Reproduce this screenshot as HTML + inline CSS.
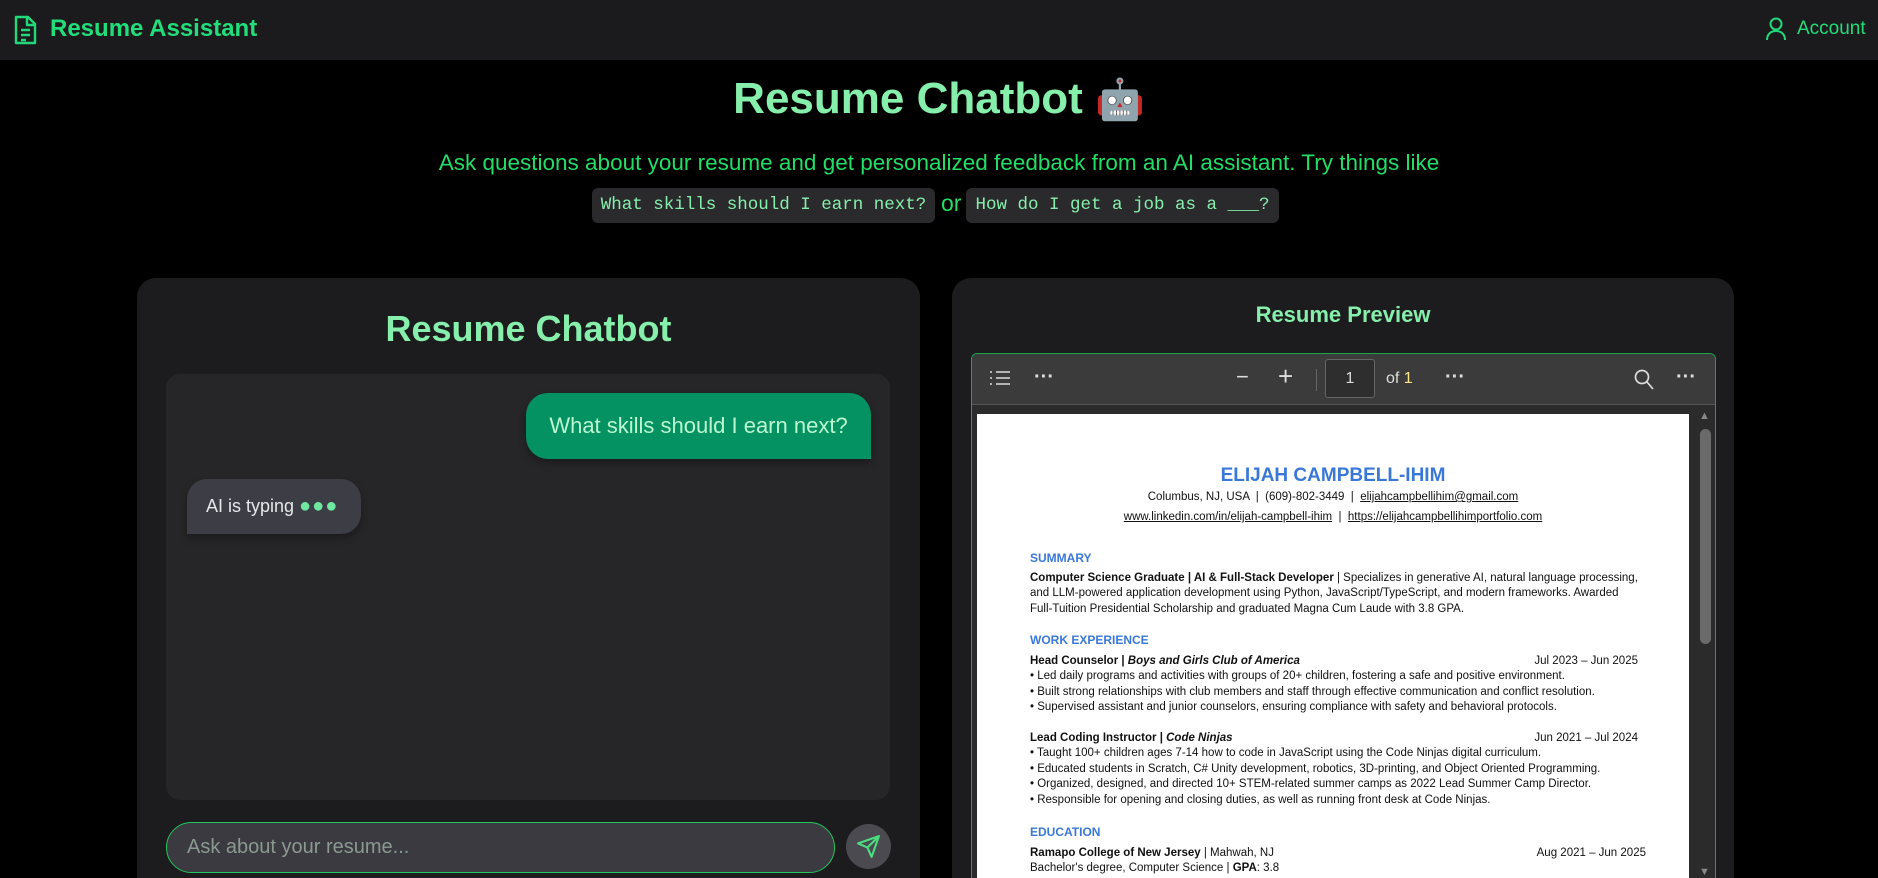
<!DOCTYPE html>
<html><head><meta charset="utf-8"><style>
*{box-sizing:border-box;margin:0;padding:0}
html,body{width:1878px;height:878px;overflow:hidden;background:#000}
#w{width:1878px;height:878px;overflow:hidden;position:relative;background:#000;font-family:"Liberation Sans",sans-serif}
.abs{position:absolute}
.hdr{left:0;top:0;width:1878px;height:60px;background:#1b1b1d}
.mono{font-family:"Liberation Mono",monospace}
.pdf{font-family:"Liberation Sans",sans-serif;font-size:11.5px;color:#111;white-space:nowrap}
.pdf .h{color:#3a78d8;font-weight:bold;font-size:12px}
.r{position:absolute;right:0}
</style></head><body><div id="w">
<div class="abs hdr"></div>
<svg class="abs" style="left:13px;top:15px" width="24" height="30" viewBox="0 0 24 30" fill="none" stroke="#22d97a" stroke-width="2.4" stroke-linejoin="round"><path d="M3 2h12l7 7v19H3z"/><path d="M14 2v8h8"/><path d="M8 15h9M8 20h9M8 25h5"/></svg>
<div class="abs" style="left:50px;top:15px;font-size:24px;font-weight:bold;color:#22dd7a">Resume Assistant</div>
<svg class="abs" style="left:1766px;top:17px" width="20" height="24" viewBox="0 0 20 24" fill="none" stroke="#22d97a" stroke-width="2"><circle cx="10" cy="7" r="5.5"/><path d="M1 23c0-6 4-9 9-9s9 3 9 9"/></svg>
<div class="abs" style="left:1797px;top:18px;font-size:19px;color:#22dd7a">Account</div>

<div class="abs" style="left:0;width:1878px;top:74px;text-align:center;font-size:44px;font-weight:bold;color:#86efac">Resume Chatbot <span style="font-size:40px">🤖</span></div>
<div class="abs" style="left:0;width:1878px;top:150px;text-align:center;font-size:22.5px;color:#22dd66">Ask questions about your resume and get personalized feedback from an AI assistant. Try things like</div>
<div class="abs mono" style="left:592px;top:188px;width:343px;height:35px;background:#2a2a2c;border-radius:6px;color:#86efac;font-size:17.5px;line-height:35px;text-align:center">What skills should I earn next?</div>
<div class="abs" style="left:941px;top:190px;font-size:23px;color:#22dd66">or</div>
<div class="abs mono" style="left:966px;top:188px;width:313px;height:35px;background:#2a2a2c;border-radius:6px;color:#86efac;font-size:17.5px;line-height:35px;text-align:center">How do I get a job as a ___?</div>

<div class="abs" style="left:137px;top:278px;width:783px;height:640px;background:#1c1c1e;border-radius:19px"></div>
<div class="abs" style="left:137px;width:783px;top:308px;text-align:center;font-size:36px;font-weight:bold;color:#86efac">Resume Chatbot</div>
<div class="abs" style="left:166px;top:374px;width:724px;height:426px;background:#262628;border-radius:14px"></div>
<div class="abs" style="left:526px;top:393px;width:345px;height:66px;background:#049262;border-radius:22px 22px 0 22px;color:#bbf7d0;font-size:22px;line-height:66px;text-align:center;box-shadow:0 4px 8px rgba(0,0,0,.3)">What skills should I earn next?</div>
<div class="abs" style="left:187px;top:479px;width:174px;height:55px;background:#3d3d45;border-radius:20px 20px 20px 0;color:#e5e7eb;font-size:18px;line-height:55px;padding-left:19px;box-shadow:0 4px 8px rgba(0,0,0,.3)">AI is typing <span style="color:#6ee7a0;font-size:20px;letter-spacing:1px">●●●</span></div>
<div class="abs" style="left:166px;top:822px;width:669px;height:51px;background:#3a3a40;border:1.5px solid #22c55e;border-radius:26px;color:#8b9a90;font-size:20px;line-height:48px;padding-left:20px">Ask about your resume...</div>
<div class="abs" style="left:846px;top:824px;width:45px;height:45px;border-radius:50%;background:#4a4a50"></div>
<svg class="abs" style="left:856px;top:834px" width="25" height="25" viewBox="0 0 24 24" fill="none" stroke="#4ade80" stroke-width="2" stroke-linejoin="round"><path d="M22 2 11 13M22 2l-7 20-4-9-9-4z"/></svg>

<div class="abs" style="left:952px;top:278px;width:782px;height:640px;background:#1c1c1e;border-radius:19px"></div>
<div class="abs" style="left:952px;width:782px;top:302px;text-align:center;font-size:22px;font-weight:bold;color:#86efac">Resume Preview</div>
<div class="abs" style="left:971px;top:353px;width:745px;height:540px;border:1px solid #1aa34a;border-radius:6px;background:#2b2b2b;overflow:hidden">
 <div class="abs" style="left:0;top:0;width:745px;height:51px;background:#3b3b3b;border-bottom:1px solid #555"></div>
 <svg class="abs" style="left:17px;top:16px" width="22" height="16" viewBox="0 0 22 16" stroke="#ddd" stroke-width="1.6"><path d="M1 2h2M7 2h14M1 8h2M7 8h14M1 14h2M7 14h14"/></svg>
 <div class="abs" style="left:62px;top:12px;color:#ddd;font-size:20px;font-weight:bold">···</div>
 <div class="abs" style="left:264px;top:10px;color:#ddd;font-size:22px">−</div>
 <div class="abs" style="left:306px;top:7px;color:#ddd;font-size:26px;font-weight:300">+</div>
 <div class="abs" style="left:344px;top:15px;width:1px;height:22px;background:#666"></div>
 <div class="abs" style="left:353px;top:5px;width:50px;height:39px;border:1px solid #666;border-radius:3px;background:#2e2e2e;color:#ddd;font-size:16px;line-height:37px;text-align:center">1</div>
 <div class="abs" style="left:414px;top:16px;color:#ddd;font-size:16px">of <span style="color:#fde68a">1</span></div>
 <div class="abs" style="left:473px;top:12px;color:#ddd;font-size:20px;font-weight:bold">···</div>
 <svg class="abs" style="left:662px;top:15px" width="20" height="22" viewBox="0 0 20 22" fill="none" stroke="#ddd" stroke-width="1.7"><circle cx="8" cy="8" r="6.5"/><path d="M13 13l6 7"/></svg>
 <div class="abs" style="left:704px;top:12px;color:#ddd;font-size:20px;font-weight:bold">···</div>
 <div class="abs" style="left:728px;top:75px;width:11px;height:215px;background:#6a6a6a;border-radius:6px"></div>
 <div class="abs" style="left:727px;top:56px;color:#888;font-size:11px">▲</div>
 <div class="abs pdf" style="left:5px;top:60px;width:712px;height:500px;background:#fff">
  <div class="abs" style="left:0;width:712px;top:51px;text-align:center;color:#3a78d8;font-size:19px;font-weight:bold">ELIJAH CAMPBELL-IHIM</div>
  <div class="abs" style="left:0;width:712px;top:77px;text-align:center">Columbus, NJ, USA &nbsp;| &nbsp;(609)-802-3449 &nbsp;| &nbsp;<u>elijahcampbellihim@gmail.com</u></div>
  <div class="abs" style="left:0;width:712px;top:97px;text-align:center"><u>www.linkedin.com/in/elijah-campbell-ihim</u> &nbsp;| &nbsp;<u>https://elijahcampbellihimportfolio.com</u></div>
  <div class="abs" style="left:53px;top:137px;width:616px;line-height:15.5px">
   <div class="h">SUMMARY</div>
   <div style="margin-top:4px"><b>Computer Science Graduate | AI &amp; Full-Stack Developer</b> | Specializes in generative AI, natural language processing,<br>and LLM-powered application development using Python, JavaScript/TypeScript, and modern frameworks. Awarded<br>Full-Tuition Presidential Scholarship and graduated Magna Cum Laude with 3.8 GPA.</div>
   <div class="h" style="margin-top:16px">WORK EXPERIENCE</div>
   <div style="margin-top:5px;position:relative"><b>Head Counselor | <i>Boys and Girls Club of America</i></b><span class="r" style="right:8px">Jul 2023 – Jun 2025</span></div>
   <div>• Led daily programs and activities with groups of 20+ children, fostering a safe and positive environment.<br>• Built strong relationships with club members and staff through effective communication and conflict resolution.<br>• Supervised assistant and junior counselors, ensuring compliance with safety and behavioral protocols.</div>
   <div style="margin-top:15px;position:relative"><b>Lead Coding Instructor | <i>Code Ninjas</i></b><span class="r" style="right:8px">Jun 2021 – Jul 2024</span></div>
   <div>• Taught 100+ children ages 7-14 how to code in JavaScript using the Code Ninjas digital curriculum.<br>• Educated students in Scratch, C# Unity development, robotics, 3D-printing, and Object Oriented Programming.<br>• Organized, designed, and directed 10+ STEM-related summer camps as 2022 Lead Summer Camp Director.<br>• Responsible for opening and closing duties, as well as running front desk at Code Ninjas.</div>
   <div class="h" style="margin-top:17px">EDUCATION</div>
   <div style="margin-top:5px;position:relative"><b>Ramapo College of New Jersey</b> | Mahwah, NJ<span class="r">Aug 2021 – Jun 2025</span></div>
   <div>Bachelor's degree, Computer Science | <b>GPA</b>: 3.8</div>
  </div>
 </div>
 <div class="abs" style="left:727px;top:512px;color:#888;font-size:11px">▼</div>
</div>
</div></body></html>
